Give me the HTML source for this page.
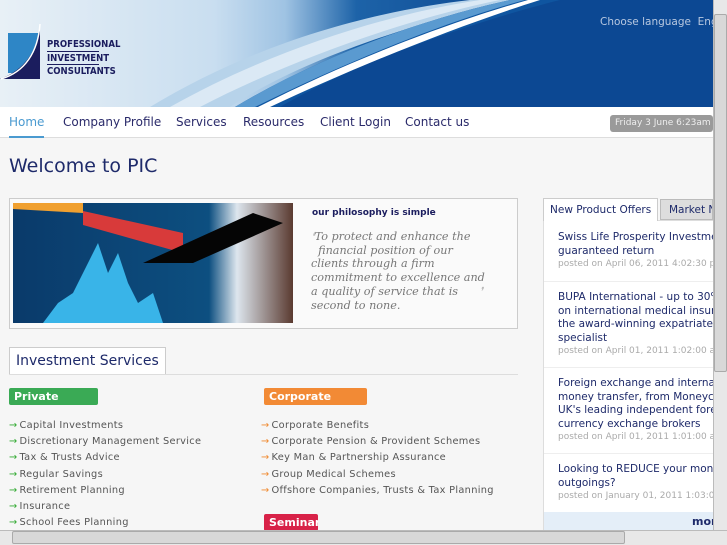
<!DOCTYPE html>
<html><head><style>
*{margin:0;padding:0;box-sizing:border-box}
body{width:727px;height:545px;overflow:hidden;background:#f6f6f6;font-family:"DejaVu Sans","Liberation Sans",sans-serif;position:relative}
.hdr{position:absolute;left:0;top:0;width:713px;height:107px;overflow:hidden;background:linear-gradient(90deg,#e8f0f6 0%,#c9def0 30%,#9fc3e3 40%,#1d63a8 50%,#0d4a94 70%,#0a237a 100%)}
.nav{position:absolute;top:107px;left:0;width:713px;height:31px;background:#fff;border-bottom:1px solid #ddd}
.nav span{position:absolute;top:8px;font-size:12px;color:#2a2a6a}
.a{position:absolute;white-space:nowrap}
.box{position:absolute;left:9px;top:198px;width:509px;height:131px;border:1px solid #ccc;background:#fafafa}
.li{position:absolute;font-size:9.8px;color:#555;letter-spacing:.3px}
.li b{font-weight:normal;color:#3a3;margin-right:2px}
.li.o b{color:#f08a30}
.tag{position:absolute;height:17px;color:#fff;font-weight:bold;font-size:11px;padding:2px 5px;border-radius:2px}
.news{position:absolute;left:543px;top:220px;width:170px;height:310px;background:#fff;border:1px solid #ddd;border-right:none}
.it{position:absolute;left:14px;font-size:10.5px;line-height:13.5px;color:#1e2a6a;white-space:nowrap}
.it i{font-style:normal;color:#aaa;font-size:9px;display:block}
</style></head><body>
<div class="hdr">
<svg width="713" height="107" style="position:absolute;left:0;top:0">
<path d="M150 107 C260 40 380 10 470 0 L520 0 C420 20 300 60 230 107Z" fill="#b7d3ea"/>
<path d="M170 107 C280 45 400 12 480 0 L500 0 C410 18 290 60 200 107Z" fill="#fff" opacity=".5"/>
<path d="M235 107 C330 50 440 15 510 0 L713 0 L713 107Z" fill="#0f55a0"/>
<path d="M235 107 C330 50 440 15 510 0 L525 0 C450 20 350 60 255 107Z" fill="#5a9ad0"/>
<path d="M258 107 C350 60 450 22 528 0 L540 0 C460 25 360 65 270 107Z" fill="#fff"/>
<path d="M280 107 C360 60 480 20 560 0 L713 0 L713 107Z" fill="#0a3f8a" opacity=".6"/>
<rect x="8" y="33" width="32" height="40" fill="#2e86c6"/>
<path d="M40 24 L40 79 L0 79 C25 70 38 50 40 24Z" fill="#1b1d5e"/>
<path d="M40 24 C38 52 25 72 1 79" stroke="#fff" stroke-width="1.5" fill="none"/>
</svg>
<div class="a" style="left:47px;top:38px;font-size:9.5px;font-weight:bold;color:#1b1d5e;line-height:13.5px;transform:scaleX(.9);transform-origin:left">PROFESSIONAL<br>INVESTMENT<br>CONSULTANTS</div>
<div class="a" style="left:47px;top:51px;width:52px;height:1px;background:#1b1d5e"></div>
<div class="a" style="left:47px;top:64px;width:52px;height:1px;background:#1b1d5e"></div>
<div class="a" style="left:600px;top:16px;font-size:10.5px;color:#b8c8e0">Choose language &nbsp;Eng</div>
</div>
<div class="nav">
<span style="left:9px;color:#4a9ad0">Home</span>
<div class="a" style="left:9px;top:29px;width:35px;height:2px;background:#4a9ad0"></div>
<span style="left:63px">Company Profile</span>
<span style="left:176px">Services</span>
<span style="left:243px">Resources</span>
<span style="left:320px">Client Login</span>
<span style="left:405px">Contact us</span>
<div class="a" style="left:610px;top:8px;width:103px;height:17px;background:#9a9a9a;border-radius:3px;color:#eee;font-size:9px;padding:3px 5px">Friday 3 June 6:23am</div>
</div>
<div class="a" style="left:9px;top:155px;font-size:19px;color:#1e2a6a">Welcome to PIC</div>
<div class="box">
<svg width="280" height="120" style="position:absolute;left:3px;top:4px">
<defs><linearGradient id="g" x1="0" y1="0" x2="1" y2="0"><stop offset="0" stop-color="#0a3a6a"/><stop offset=".7" stop-color="#0d4f80"/><stop offset=".8" stop-color="#dde6ee"/><stop offset="1" stop-color="#5a3a30"/></linearGradient></defs>
<rect width="280" height="120" fill="url(#g)"/>
<path d="M0 0 L70 0 L70 10 L0 6Z" fill="#f0a030"/>
<path d="M70 8 L170 30 L170 50 L70 22Z" fill="#d83a3a"/>
<path d="M30 120 L45 100 L60 90 L75 60 L85 40 L95 70 L105 50 L115 80 L125 100 L140 90 L150 120Z" fill="#39b4e8"/>
<path d="M130 60 L240 10 L270 20 L180 60Z" fill="#050505"/>
</svg>
<div class="a" style="left:302px;top:9px;font-size:9px;font-weight:bold;color:#1b1d5e">our philosophy is simple</div>
<div class="a" style="left:301px;top:31px;font-family:'DejaVu Serif','Liberation Serif',serif;font-style:italic;font-size:11.2px;line-height:13.7px;color:#777"><span style="color:#bbb">❛</span>To protect and enhance the<br>&nbsp;&nbsp;financial position of our<br>clients through a firm<br>commitment to excellence and<br>a quality of service that is <span style="color:#bbb">&nbsp;&nbsp;&nbsp;&nbsp;&nbsp;❜</span><br>second to none.</div>
</div>
<div class="a" style="left:9px;top:347px;width:157px;height:28px;background:#fff;border:1px solid #ccc;border-bottom:none;font-size:14px;color:#1e2a6a;padding:5px 6px">Investment Services</div>
<div class="a" style="left:9px;top:374px;width:509px;height:1px;background:#ddd"></div>
<div class="tag" style="left:9px;top:388px;width:89px;background:#3aaa55">Private</div>
<div class="tag" style="left:264px;top:388px;width:103px;background:#f28a35">Corporate</div>
<div class="tag" style="left:264px;top:514px;width:54px;background:#d82248;overflow:hidden;white-space:nowrap">Seminars</div>
<div class="li" style="left:9px;top:420px"><b>→</b>Capital Investments</div>
<div class="li" style="left:9px;top:436px"><b>→</b>Discretionary Management Service</div>
<div class="li" style="left:9px;top:452px"><b>→</b>Tax &amp; Trusts Advice</div>
<div class="li" style="left:9px;top:469px"><b>→</b>Regular Savings</div>
<div class="li" style="left:9px;top:485px"><b>→</b>Retirement Planning</div>
<div class="li" style="left:9px;top:501px"><b>→</b>Insurance</div>
<div class="li" style="left:9px;top:517px"><b>→</b>School Fees Planning</div>
<div class="li o" style="left:261px;top:420px"><b>→</b>Corporate Benefits</div>
<div class="li o" style="left:261px;top:436px"><b>→</b>Corporate Pension &amp; Provident Schemes</div>
<div class="li o" style="left:261px;top:452px"><b>→</b>Key Man &amp; Partnership Assurance</div>
<div class="li o" style="left:261px;top:469px"><b>→</b>Group Medical Schemes</div>
<div class="li o" style="left:261px;top:485px"><b>→</b>Offshore Companies, Trusts &amp; Tax Planning</div>
<div class="news">
<div class="it" style="top:10px">Swiss Life Prosperity Investment<br>guaranteed return<i>posted on April 06, 2011 4:02:30 pm</i></div>
<div class="a" style="left:0;top:60px;width:170px;height:1px;background:#eee"></div>
<div class="it" style="top:70px">BUPA International - up to 30%<br>on international medical insur<br>the award-winning expatriate i<br>specialist<i>posted on April 01, 2011 1:02:00 am</i></div>
<div class="a" style="left:0;top:146px;width:170px;height:1px;background:#eee"></div>
<div class="it" style="top:156px">Foreign exchange and internat<br>money transfer, from Moneyc<br>UK's leading independent fore<br>currency exchange brokers<i>posted on April 01, 2011 1:01:00 am</i></div>
<div class="a" style="left:0;top:232px;width:170px;height:1px;background:#eee"></div>
<div class="it" style="top:242px">Looking to REDUCE your montl<br>outgoings?<i>posted on January 01, 2011 1:03:00</i></div>
<div class="a" style="left:0;top:291px;width:170px;height:20px;background:#e4eef8"></div>
<div class="a" style="left:148px;top:294px;font-size:11px;font-weight:bold;color:#1e2a6a">mor</div>
</div>
<div class="a" style="left:543px;top:198px;width:115px;height:23px;background:#fff;border:1px solid #ccc;border-bottom:none;font-size:10.5px;color:#1e2a6a;padding:5px 6px">New Product Offers</div>
<div class="a" style="left:660px;top:199px;width:53px;height:21px;background:#ddd;border:1px solid #bbb;font-size:10.5px;color:#1e2a6a;padding:4px 8px;white-space:nowrap;overflow:hidden">Market N</div>
<div class="a" style="left:713px;top:0;width:14px;height:530px;background:#e8e8e8;border-left:1px solid #bbb"></div>
<div class="a" style="left:714px;top:14px;width:13px;height:358px;background:#d8d8d8;border:1px solid #aaa;border-radius:2px"></div>
<div class="a" style="left:0;top:530px;width:727px;height:15px;background:#e8e8e8;border-top:1px solid #bbb"></div>
<div class="a" style="left:12px;top:531px;width:613px;height:13px;background:#d8d8d8;border:1px solid #aaa;border-radius:2px"></div>
</body></html>
